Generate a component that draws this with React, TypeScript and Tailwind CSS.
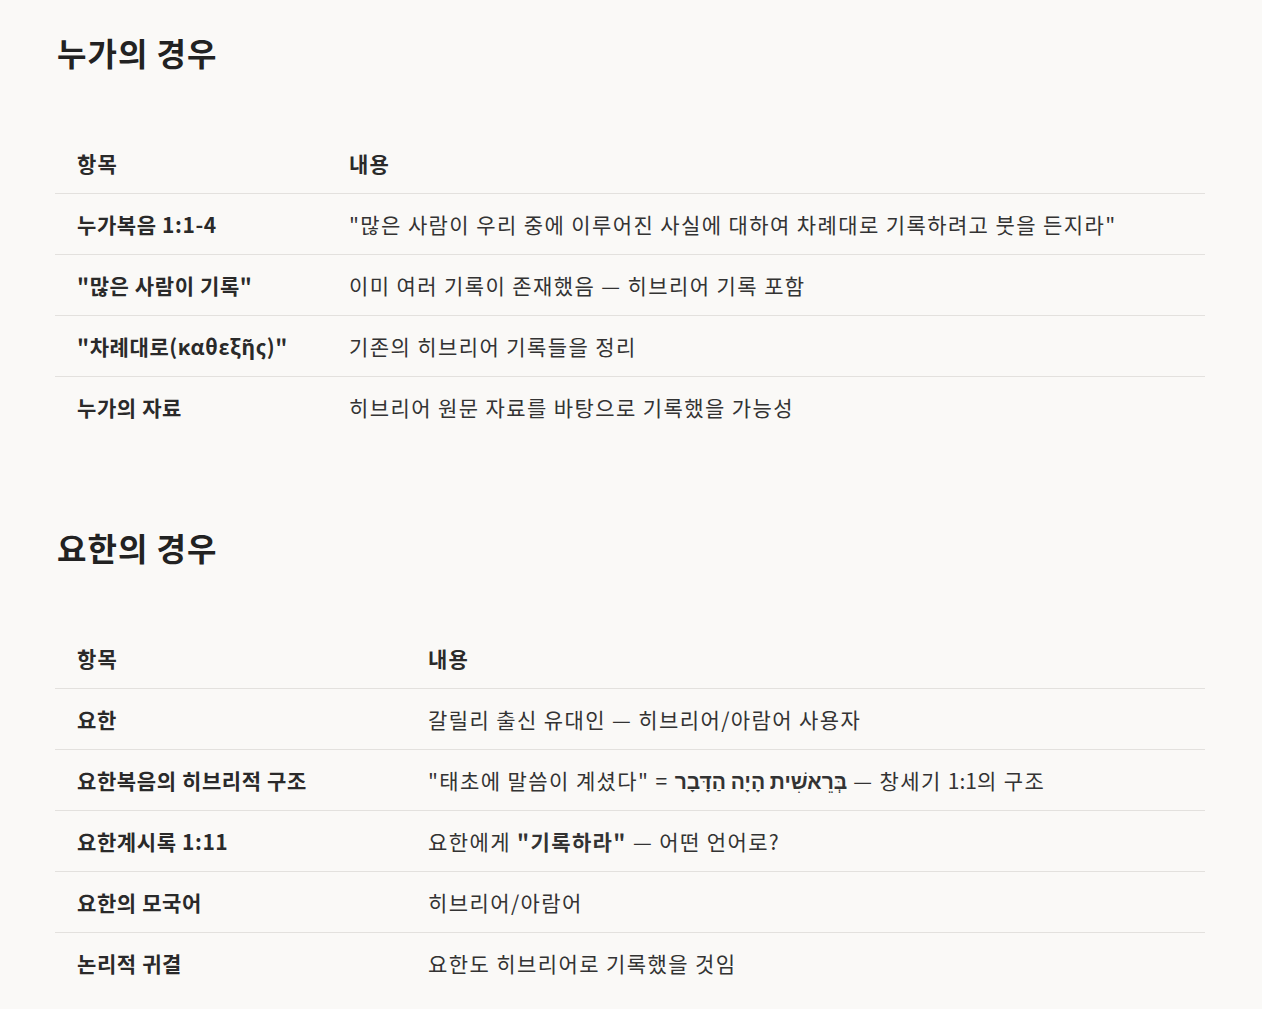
import React from "react";

type Row = { k: React.ReactNode; v: React.ReactNode };

const luke: Row[] = [
  { k: "누가복음 1:1-4", v: "\"많은 사람이 우리 중에 이루어진 사실에 대하여 차례대로 기록하려고 붓을 든지라\"" },
  { k: "\"많은 사람이 기록\"", v: "이미 여러 기록이 존재했음 — 히브리어 기록 포함" },
  { k: "\"차례대로(καθεξῆς)\"", v: "기존의 히브리어 기록들을 정리" },
  { k: "누가의 자료", v: "히브리어 원문 자료를 바탕으로 기록했을 가능성" },
];

const john: Row[] = [
  { k: "요한", v: "갈릴리 출신 유대인 — 히브리어/아람어 사용자" },
  {
    k: "요한복음의 히브리적 구조",
    v: (
      <>
        "태초에 말씀이 계셨다" = <span dir="rtl" className="font-semibold tracking-normal">בְּרֵאשִׁית הָיָה הַדָּבָר</span> — 창세기 <span className="tracking-normal">1:1</span>의 구조
      </>
    ),
  },
  {
    k: "요한계시록 1:11",
    v: (
      <>
        요한에게 <b className="font-bold">"기록하라"</b> — 어떤 언어로?
      </>
    ),
  },
  { k: "요한의 모국어", v: "히브리어/아람어" },
  { k: "논리적 귀결", v: "요한도 히브리어로 기록했을 것임" },
];

function Section({ title, rows, col }: { title: string; rows: Row[]; col: string }) {
  return (
    <section>
      <h2 className="text-[32px] font-bold leading-[40px] tracking-[1px] text-[#222222] pl-[2px]">{title}</h2>
      <table className="mt-[61px] w-full border-collapse table-fixed">
        <colgroup>
          <col className={col} />
          <col />
        </colgroup>
        <thead>
          <tr className="border-b border-[#e3e1de]">
            <th className="px-[22px] py-[16px] text-left text-[21px] leading-[28px] tracking-[1.3px] font-bold text-[#2a2a2a]">항목</th>
            <th className="px-[22px] py-[16px] text-left text-[21px] leading-[28px] tracking-[1.3px] font-bold text-[#2a2a2a]">내용</th>
          </tr>
        </thead>
        <tbody>
          {rows.map((r, i) => (
            <tr key={i} className={i < rows.length - 1 ? "border-b border-[#e3e1de]" : ""}>
              <td className="px-[22px] py-[16px] text-[21px] leading-[28px] tracking-[0.6px] font-bold text-[#2a2a2a] whitespace-nowrap">{r.k}</td>
              <td className="px-[22px] py-[16px] text-[21px] leading-[28px] tracking-[1.4px] text-[#333333] whitespace-nowrap">{r.v}</td>
            </tr>
          ))}
        </tbody>
      </table>
    </section>
  );
}

export default function App() {
  return (
    <div
      className="min-h-screen bg-[#faf9f7] pl-[55px] pt-[32px] pb-[20px]"
      style={{ fontFamily: '"Noto Sans CJK KR", "Noto Sans", sans-serif' }}
    >
      <div className="w-[1150px] flex flex-col gap-[90px]">
        <Section title="누가의 경우" rows={luke} col="w-[272px]" />
        <Section title="요한의 경우" rows={john} col="w-[351px]" />
      </div>
    </div>
  );
}
